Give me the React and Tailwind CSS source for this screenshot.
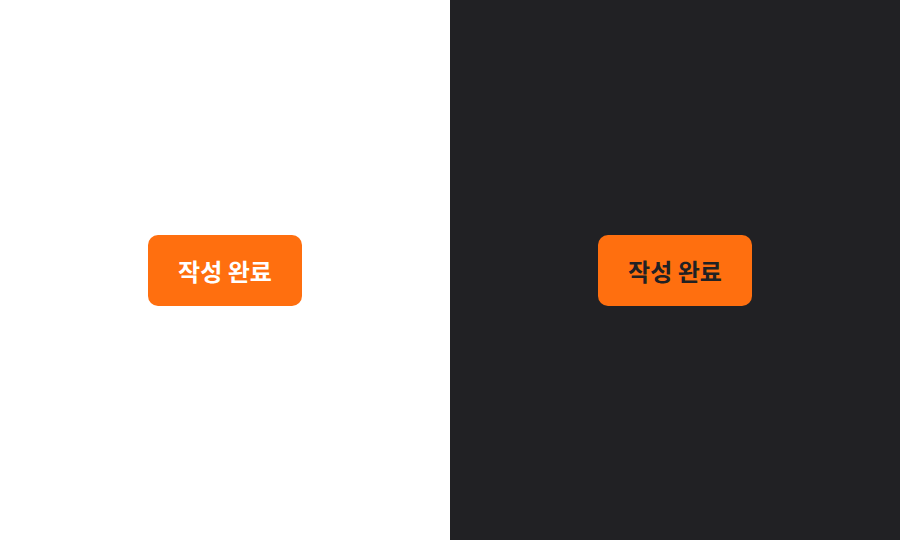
import React from "react";

function SubmitButton({ dark }) {
  return (
    <button
      type="button"
      className={
        dark
          ? "rounded-[10px] bg-[#ff6f0f] px-[30px] py-[19px] text-[24px] leading-[33px] font-bold text-[#212124]"
          : "rounded-[10px] bg-[#ff6f0f] px-[30px] py-[19px] text-[24px] leading-[33px] font-bold text-white"
      }
      style={{ fontFamily: '"Noto Sans CJK KR", "Noto Sans", sans-serif' }}
    >
      작성 완료
    </button>
  );
}

export default function App() {
  return (
    <div className="flex h-[540px] w-[900px]">
      <div className="flex flex-1 items-center justify-center bg-white">
        <SubmitButton />
      </div>
      <div className="flex flex-1 items-center justify-center bg-[#212124]">
        <SubmitButton dark />
      </div>
    </div>
  );
}
